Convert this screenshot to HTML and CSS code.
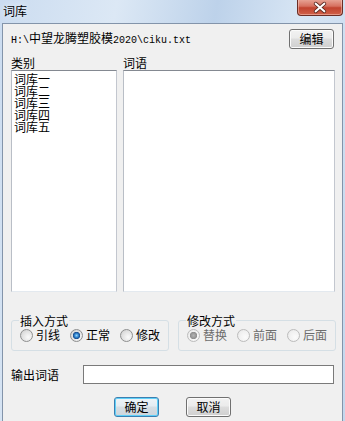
FILE: index.html
```html
<!DOCTYPE html>
<html lang="zh-CN">
  <head>
    <meta charset="UTF-8" />
    <meta name="viewport" content="width=device-width, initial-scale=1.0" />
    <title>词库</title>
    <link rel="stylesheet" href="styles.css">
  </head>
  <body>
    <div class="window">
      <div class="titlebar">
        <span class="title">词库</span>
        <button class="close" aria-label="关闭">
          <svg width="46" height="17" viewBox="0 0 46 17">
            <path d="M18.5 4.5 L27.5 12.5 M27.5 4.5 L18.5 12.5" stroke="#5a2a22" stroke-width="4" stroke-linecap="round" />
            <path d="M18.5 4.5 L27.5 12.5 M27.5 4.5 L18.5 12.5" stroke="#ffffff" stroke-width="2.2" stroke-linecap="round" />
          </svg>
        </button>
      </div>

      <div class="client">
        <div class="path-row">
          <span class="path">H:\<span class="cjk">中望龙腾塑胶模</span>2020\ciku.txt</span>
          <button class="btn">编辑</button>
        </div>

        <div class="lists">
          <div class="col">
            <div class="label">类别</div>
            <ul class="listbox">
              <li>词库一</li>
              <li>词库二</li>
              <li>词库三</li>
              <li>词库四</li>
              <li>词库五</li>
            </ul>
          </div>
          <div class="col">
            <div class="label">词语</div>
            <div class="listbox"></div>
          </div>
        </div>

        <div class="groups">
          <fieldset class="group">
            <legend>插入方式</legend>
            <div class="radios">
              <span class="option"><span class="radio"></span>引线</span>
              <span class="option"><span class="radio checked"></span>正常</span>
              <span class="option"><span class="radio"></span>修改</span>
            </div>
          </fieldset>
          <fieldset class="group">
            <legend>修改方式</legend>
            <div class="radios disabled">
              <span class="option"><span class="radio checked"></span>替换</span>
              <span class="option"><span class="radio"></span>前面</span>
              <span class="option"><span class="radio"></span>后面</span>
            </div>
          </fieldset>
        </div>

        <div class="output-row">
          <span class="output-label">输出词语</span>
          <div class="output"></div>
        </div>

        <div class="actions">
          <button class="btn btn-default">确定</button>
          <button class="btn">取消</button>
        </div>
      </div>
    </div>
  </body>
</html>
```

FILE: styles.css
```css
body {
  margin: 0;
  font-family: "Noto Sans CJK SC", sans-serif;
  font-size: 12px;
  color: #000;
}

.window {
  width: 345px;
  height: 421px;
  overflow: hidden;
  box-sizing: border-box;
  padding: 0 2px;
  display: flex;
  flex-direction: column;
  background: linear-gradient(100deg, #cbdcf0 0%, #dce8f5 28%, #bdd2ea 52%, #d7e5f4 72%, #c4d7ed 100%);
}

.titlebar {
  height: 23px;
  flex: none;
  display: flex;
  justify-content: space-between;
  align-items: flex-start;
}

.title {
  padding: 4px 0 0 1px;
  line-height: 13px;
  text-shadow: 0 0 6px #f4f8fc;
}

.close {
  width: 46px;
  height: 17px;
  padding: 0;
  margin-top: -1px;
  border: 1px solid #6b2d25;
  border-top: none;
  border-radius: 0 0 4px 4px;
  background: linear-gradient(#e9a99b, #d6705f 45%, #c1432f 55%, #d0614a);
  box-shadow: inset 0 0 0 1px rgba(255, 220, 210, 0.45);
  display: flex;
}

.client {
  flex: 1;
  background-color: #f0f0f0;
  border: 1px solid #8394aa;
  border-bottom: none;
}

.path-row {
  margin-top: 5px;
  height: 20px;
  padding: 0 8px 0 8px;
  display: flex;
  justify-content: space-between;
  align-items: center;
}

.path {
  font-family: "Liberation Mono", monospace;
  font-size: 10px;
  line-height: 13px;
}

.path .cjk {
  font-family: "Noto Sans CJK SC", sans-serif;
  font-size: 12px;
}

.btn {
  width: 45px;
  height: 20px;
  padding: 0;
  font-family: "Noto Sans CJK SC", sans-serif;
  font-size: 12px;
  line-height: 16px;
  color: #000;
  border: 1px solid #707070;
  border-radius: 3px;
  background: linear-gradient(#f2f2f2, #ebebeb 45%, #dddddd 50%, #cfcfcf);
  box-shadow: inset 0 0 0 1px #fbfbfb;
}

.btn-default {
  border-color: #3c7fb1;
  box-shadow: inset 0 0 0 1px #5fd0f8;
  background: linear-gradient(#eef4f8, #e4ecf2 45%, #d6dee4 50%, #cdd5dc);
}

.lists {
  margin-top: 7px;
  padding: 0 7px 0 8px;
  display: grid;
  grid-template-columns: 106px 1fr;
  gap: 6px;
}

.label {
  height: 14px;
  line-height: 14px;
}

.listbox {
  height: 222px;
  box-sizing: border-box;
  margin: 0;
  padding: 2px 2px;
  list-style: none;
  background-color: #fff;
  border: 1px solid;
  border-color: #848991 #c3c7cf #e3e9ef #b9bec6;
}

.listbox li {
  line-height: 12px;
  height: 12px;
}

.groups {
  margin-top: 22px;
  padding: 0 7px 0 8px;
  display: grid;
  grid-template-columns: 158px 158px;
  gap: 9px;
}

.group {
  margin: 0;
  padding: 1px 0 8px 8px;
  min-width: 0;
  border: 1px solid #d5dfe5;
  border-radius: 3px;
}

.group legend {
  padding: 0 1px;
  margin-left: -1px;
  line-height: 13px;
}

.radios {
  display: flex;
  gap: 10px;
  line-height: 14px;
}

.option {
  display: flex;
  align-items: center;
  gap: 3px;
}

.radio {
  width: 13px;
  height: 13px;
  box-sizing: border-box;
  border-radius: 50%;
  border: 1px solid #8e8f8f;
  background: radial-gradient(circle at 65% 65%, #fafafa 0, #e2e2e2 55%, #c9c9c9 100%);
}

.radio.checked {
  background:
    radial-gradient(circle, #8fd6fb 0, #2a79c6 2.2px, #184a86 3.4px, transparent 3.9px),
    radial-gradient(circle at 65% 65%, #fafafa 0, #e2e2e2 55%, #c9c9c9 100%);
}

.radios.disabled {
  color: #6d6d6d;
}

.radios.disabled .radio {
  border-color: #bcbcbc;
  background: radial-gradient(circle at 65% 65%, #fbfbfb 0, #f0f0f0 60%, #e2e2e2 100%);
}

.radios.disabled .radio.checked {
  background:
    radial-gradient(circle, #b4b4b4 0, #8e8e8e 3.4px, transparent 3.9px),
    radial-gradient(circle at 65% 65%, #fbfbfb 0, #f0f0f0 60%, #e2e2e2 100%);
}

.output-row {
  margin-top: 14px;
  padding: 0 8px;
  display: flex;
  align-items: center;
}

.output-label {
  width: 72px;
}

.output {
  width: 252px;
  height: 19px;
  box-sizing: border-box;
  background-color: #fff;
  border: 1px solid #7a7a7a;
}

.actions {
  margin-top: 13px;
  display: flex;
  justify-content: center;
  gap: 27px;
}
```
